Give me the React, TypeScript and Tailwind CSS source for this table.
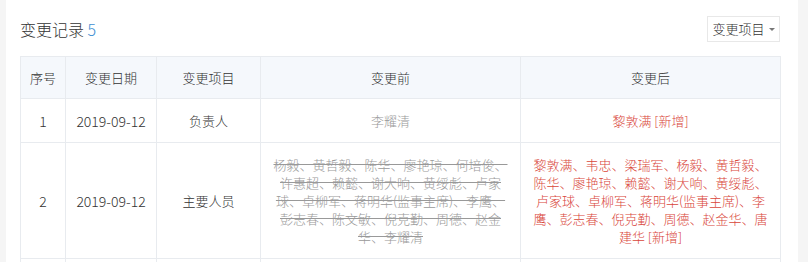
import React from "react";

const before =
  "杨毅、黄哲毅、陈华、廖艳琼、何培俊、许惠超、赖懿、谢大响、黄绥彪、卢家球、卓柳军、蒋明华(监事主席)、李鹰、彭志春、陈文敏、倪克勤、周德、赵金华、李耀清";
const after =
  "黎敦满、韦忠、梁瑞军、杨毅、黄哲毅、陈华、廖艳琼、赖懿、谢大响、黄绥彪、卢家球、卓柳军、蒋明华(监事主席)、李鹰、彭志春、倪克勤、周德、赵金华、唐建华 [新增]";

const font = { fontFamily: '"Noto Sans CJK SC", "Liberation Sans", sans-serif' };

export default function App() {
  return (
    <div className="flex h-[262px] w-[808px] overflow-hidden bg-white font-light text-[#333]" style={font}>
      <div className="w-[6px] shrink-0 bg-[#f5f5f5]" />
      <div className="flex w-[792px] shrink-0 flex-col pl-[14px] pr-[18px]">
        <div className="mt-[16px] flex h-[26px] items-center justify-between">
          <div className="text-[16px] leading-[26px] text-[#333]">
            变更记录 <span className="text-[#3f8fd2]">5</span>
          </div>
          <button className="flex h-[26px] w-[73px] items-center justify-center gap-[4px] border border-[#e8e8e8] bg-white text-[13px] font-light text-[#333]">
            变更项目
            <span className="inline-block h-0 w-0 border-x-[3px] border-t-[3px] border-x-transparent border-t-[#777]" />
          </button>
        </div>
        <table className="mt-[14px] w-[760px] table-fixed border-collapse text-[13px] leading-[18px]">
          <colgroup>
            <col className="w-[45px]" />
            <col className="w-[91px]" />
            <col className="w-[104px]" />
            <col className="w-[260px]" />
            <col className="w-[260px]" />
          </colgroup>
          <thead>
            <tr className="bg-[#f5f8fc]">
              {["序号", "变更日期", "变更项目", "变更前", "变更后"].map((h) => (
                <th key={h} className="h-[42px] border border-[#e8ebef] px-[6px] text-center font-light text-[#333]">
                  {h}
                </th>
              ))}
            </tr>
          </thead>
          <tbody>
            <tr>
              <td className="h-[44px] border border-[#e8ebef] text-center text-[14px]">1</td>
              <td className="border border-[#e8ebef] text-center text-[14px]">2019-09-12</td>
              <td className="border border-[#e8ebef] text-center">负责人</td>
              <td className="border border-[#e8ebef] px-[10px] text-center text-[#999]">李耀清</td>
              <td className="border border-[#e8ebef] px-[10px] text-center text-[#d9463a]">黎敦满 [新增]</td>
            </tr>
            <tr>
              <td className="h-[116px] border border-[#e8ebef] text-center text-[14px]">2</td>
              <td className="border border-[#e8ebef] text-center text-[14px]">2019-09-12</td>
              <td className="border border-[#e8ebef] text-center">主要人员</td>
              <td className="border border-[#e8ebef] px-[10px] text-center text-[#999] line-through">{before}</td>
              <td className="border border-[#e8ebef] px-[10px] text-center text-[#d9463a]">{after}</td>
            </tr>
            <tr>
              <td className="h-[44px] border border-[#e8ebef]" />
              <td className="border border-[#e8ebef]" />
              <td className="border border-[#e8ebef]" />
              <td className="border border-[#e8ebef]" />
              <td className="border border-[#e8ebef]" />
            </tr>
          </tbody>
        </table>
      </div>
      <div className="w-[10px] shrink-0 bg-[#f5f5f5]" />
    </div>
  );
}
